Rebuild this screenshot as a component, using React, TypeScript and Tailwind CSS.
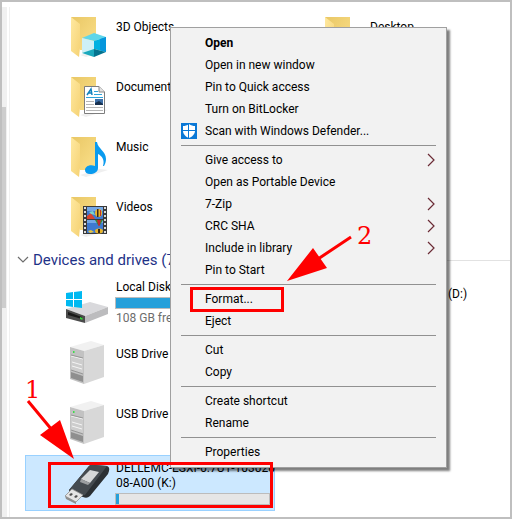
import { useId, type ReactNode } from "react";

function FolderBase({ id }: { id: string }) {
  return (
    <>
      <defs>
        <linearGradient id={`${id}b`} x1="0" y1="0" x2="1" y2="1">
          <stop offset="0" stopColor="#e9c765" />
          <stop offset="1" stopColor="#fbe08a" />
        </linearGradient>
        <linearGradient id={`${id}f`} x1="0" y1="0" x2="1" y2="1">
          <stop offset="0" stopColor="#ffe9a0" />
          <stop offset="1" stopColor="#f5d274" />
        </linearGradient>
      </defs>
      <path d="M16 43 L36 37 L44 38 L22 45Z" fill="#efefef" />
      <path d="M7 5 H32 V38 H16 Z" fill={`url(#${id}b)`} />
      <path d="M7 5 L16 12 V36 L15 45 L7 39Z" fill={`url(#${id}f)`} />
    </>
  );
}

function FolderIcon({ children }: { children?: ReactNode }) {
  const id = useId();
  return (
    <svg viewBox="0 0 48 48" className="h-12 w-12 shrink-0" aria-hidden="true">
      <FolderBase id={id} />
      {children}
    </svg>
  );
}

function CubeArt() {
  return (
    <>
      <path d="M18 26 L30 21 L42 25 L30 29Z" fill="#5fd6ea" />
      <path d="M18 26 L30 29 V38 L18 41Z" fill="#cdf0f6" />
      <path d="M30 29 L42 25 V40 L30 37Z" fill="#00b1e1" />
      <path d="M36 27 L42 25 V40 L36 38Z" fill="#0596dc" />
      <path d="M18 41 L30 37 V45Z" fill="#1ba9bd" />
      <path d="M30 37 L42 40 L30 45Z" fill="#04738f" />
    </>
  );
}

function DocumentArt() {
  return (
    <>
      <path d="M20.500 14.500 H35 L40.500 20 V41.500 H20.500Z" fill="#fff" stroke="#7d7d7d" />
      <path d="M35 14.500 V20 H40.500" fill="#e3e3e3" stroke="#8a8a8a" />
      <path d="M23 23 L27 17 L28 23 M24.500 21 H28" fill="none" stroke="#1583bd" strokeWidth="1.500" />
      <path d="M30 19.500 H34 M30 22.500 H38 M22 25.500 H39" stroke="#2fa3da" />
      <path d="M22 29.500 H30 M22 32.500 H30 M22 35.500 H39 M22 38.500 H39" stroke="#b5b5b5" />
      <path d="M31 27 H39 V33 H31Z" fill="#3d6fa8" />
      <path d="M31 31 L35 29 L39 32 V33 H31Z" fill="#17304f" />
    </>
  );
}

function MusicArt() {
  return (
    <path
      d="M31 10 H33 C34 17 42 19 42 27 C42 30 41 32 40 34 H39 C41 28 38 24 34 22 V36 C34 40 30 42 26 42 C23 42 21 40.500 21 38 C21 35 25 32 31 34Z"
      fill="#0a9bef"
    />
  );
}

function VideoArt() {
  const holes = [15, 19, 23, 27, 31, 35, 39];
  return (
    <>
      <path d="M19 14 H43 V42 H19Z" fill="#3a3a3a" />
      {holes.map((y) => (
        <path key={y} d={`M20 ${y} h2 v2 h-2z M40 ${y} h2 v2 h-2z`} fill="#dcdcdc" />
      ))}
      <path d="M23 15 H39 V27 H23Z M23 28 H39 V41 H23Z" fill="#3f79cf" />
      <path d="M23 15 H39 V19 H23Z M23 28 H39 V31 H23Z" fill="#74a8e6" />
      <path d="M23 24 L27 21 L31 27 H23Z" fill="#d8442f" />
      <path d="M25 20 L29 19 L31 23 L27 22Z" fill="#7fd4c8" />
      <ellipse cx="34.500" cy="21" rx="3.500" ry="4" fill="#e9b52c" />
      <path d="M33 17 h1.500 v8 h-1.500z" fill="#3a2a18" />
      <path d="M36 18 h1 v6 h-1z" fill="#c33428" />
      <path d="M31 28 H39 L36 33 H34Z" fill="#2f8a3c" />
      <path d="M33 28 H37 L35.500 34 H34.500Z" fill="#c92a2a" />
      <ellipse cx="35" cy="39" rx="4" ry="2.500" fill="#e9b52c" />
      <path d="M34 37 h2 v4 h-2z" fill="#3a2a18" />
      <path d="M24 39 L27 38 L30 40 L26 41Z" fill="#e8c640" />
    </>
  );
}

function SystemDriveIcon() {
  return (
    <svg viewBox="0 0 48 48" className="h-12 w-12 shrink-0" aria-hidden="true">
      <path d="M2 30 L26 23 L44 28 L21 37Z" fill="#d9d9dc" />
      <path d="M2 30 L21 37 V44 L2 39Z" fill="#4b4b4b" />
      <path d="M21 37 L44 28 V35 L21 44Z" fill="#bcbcbe" />
      <path d="M4 33 L18 38 V40 L4 36Z" fill="#191919" />
      <path d="M16 38 L18.500 39 V41 L16 40Z" fill="#34d639" />
      <path d="M2 14 L9 13 V20 H2Z M10 13 L18 12 V20 H10Z M2 21 H9 V28 L2 27Z M10 21 H18 V29 L10 28Z" fill="#00b9f1" />
    </svg>
  );
}

function TowerIcon() {
  return (
    <svg viewBox="0 0 48 48" className="h-12 w-12 shrink-0" aria-hidden="true">
      <path d="M6 8 L27 2 L40 6 L20 12Z" fill="#f1f1f1" />
      <path d="M6 8 L20 12 V45 L6 40Z" fill="#c2c2c2" />
      <path d="M20 12 L40 6 V38 L20 45Z" fill="#d8d8d8" />
      <path d="M7 17 L19 20 V34 L7 31Z" fill="#cdcdcd" />
      <path d="M7 17 L19 20 M8 23 L18 26 M8 27 L18 30" stroke="#f4f4f4" fill="none" />
      <path d="M7 16 L19 19 M7 31 L19 35" stroke="#979797" fill="none" />
      <path d="M7 33 L19 37 V43 L7 39Z" fill="#8f8f8f" />
      <path d="M9 12 h1.500 v2 h-1.500z" fill="#3fdc4c" />
    </svg>
  );
}

function UsbStickIcon() {
  return (
    <svg viewBox="0 0 48 48" className="h-12 w-12 shrink-0" aria-hidden="true">
      <path d="M5 31 L25 7 Q27 5 30 6 L43 7 Q46 8 45 12 L44 15 L26 37 Q23 40 19 38 L6 34Z" fill="#2b3034" />
      <path d="M5 31 L25 7 Q27 5 30 6 L43 7 L21 36 Q18 37 15 35Z" fill="#454b50" />
      <path d="M17 20 L26 11 L35 13 L26 24Z" fill="#d5d7d8" />
      <path d="M17 20 L26 24 L24 26 L16 23Z" fill="#9c9fa1" />
      <path d="M1 37 L8 30 L19 36 L12 43Z" fill="#e4e4e4" stroke="#929292" strokeWidth="0.800" />
      <path d="M1 37 L12 43 V45 L2 40Z" fill="#8d8d8d" />
      <path d="M5 36 L7 34 L9 35 L7 37Z M10 38 L12 36 L14 37 L12 39Z" fill="#4e4e4e" />
    </svg>
  );
}

function ShieldIcon() {
  return (
    <svg viewBox="0 0 16 16" className="h-4 w-4" aria-hidden="true">
      <path d="M0 0 H16 V16 H0Z" fill="#0a78d6" />
      <path d="M8 1 C6 2.500 4 3 2 3 V8 C2 11 5 14 8 15 C11 14 14 11 14 8 V3 C12 3 10 2.500 8 1Z" fill="#fff" />
      <path d="M7.500 1 V15 M2 7.500 H14" stroke="#0a78d6" />
    </svg>
  );
}

const folders = [
  { name: "3D Objects", art: <CubeArt /> },
  { name: "Documents", art: <DocumentArt /> },
  { name: "Music", art: <MusicArt /> },
  { name: "Videos", art: <VideoArt /> },
];

type Item = { label: string; bold?: boolean; sub?: boolean; shield?: boolean };

const groups: Item[][] = [
  [
    { label: "Open", bold: true },
    { label: "Open in new window" },
    { label: "Pin to Quick access" },
    { label: "Turn on BitLocker" },
    { label: "Scan with Windows Defender...", shield: true },
  ],
  [
    { label: "Give access to", sub: true },
    { label: "Open as Portable Device" },
    { label: "7-Zip", sub: true },
    { label: "CRC SHA", sub: true },
    { label: "Include in library", sub: true },
    { label: "Pin to Start" },
  ],
  [{ label: "Format..." }, { label: "Eject" }],
  [{ label: "Cut" }, { label: "Copy" }],
  [{ label: "Create shortcut" }, { label: "Rename" }],
  [{ label: "Properties" }],
];

function Tile({ name, children }: { name: string; children: ReactNode }) {
  return (
    <div className="flex h-[60px] items-start gap-1 pl-[39px]">
      {children}
      <span className="mt-2">{name}</span>
    </div>
  );
}

function Drive({ icon, selected, children }: { icon: ReactNode; selected?: boolean; children: ReactNode }) {
  return (
    <div
      className={
        selected
          ? "flex h-14 items-center gap-1 border border-[#99d1ff] bg-[#cce8ff] pl-[38px] pr-1"
          : "flex h-14 items-center gap-1 border border-transparent pl-[38px] pr-1"
      }
    >
      {icon}
      <div className="min-w-0 flex-1 whitespace-nowrap">{children}</div>
    </div>
  );
}

function CapacityBar({ used }: { used: number }) {
  return (
    <div className="-ml-px h-3 border border-[#bcbcbc] bg-[#e6e6e6]">
      <div className="h-full bg-[#26a0da]" style={{ width: `${used}%` }} />
    </div>
  );
}

function ContextMenu() {
  return (
    <div
      role="menu"
      className="absolute left-[168px] top-[25px] w-[277px] border border-[#a0a0a0] bg-[#f2f2f2] pb-1 pt-1 text-black shadow-[3px_3px_2px_rgba(0,0,0,0.500)]"
    >
      {groups.map((group, i) => (
        <div key={group[0].label}>
          {i > 0 && (
            <div className="flex h-[7px] items-center px-[10px]">
              <hr className="w-full border-[#919191]" />
            </div>
          )}
          {group.map((item) => (
            <button
              key={item.label}
              type="button"
              role="menuitem"
              className="flex h-[22px] w-full items-center pl-[10px] pr-[11px] text-left"
            >
              <span className="w-6 shrink-0">{item.shield && <ShieldIcon />}</span>
              <span className={item.bold ? "flex-1 font-bold" : "flex-1"}>{item.label}</span>
              {item.sub && (
                <svg viewBox="0 0 8 14" className="h-3.5 w-2" fill="none" aria-hidden="true">
                  <path d="M1 1 L7 7 L1 13" stroke="#6b2b35" strokeWidth="1.200" />
                </svg>
              )}
            </button>
          ))}
        </div>
      ))}
    </div>
  );
}

function Annotations() {
  return (
    <div className="pointer-events-none absolute inset-0 font-['DejaVu_Serif',serif] text-2xl leading-6 text-[#ff0000]">
      <div className="absolute left-[188px] top-[285px] h-[25px] w-[94px] border-3 border-[#ff0000]" />
      <div className="absolute left-[46px] top-[460px] h-[46px] w-[225px] border-3 border-[#ff0000]" />
      <svg className="absolute left-0 top-0 h-[480px] w-[400px]" viewBox="2 2 400 480" fill="#ff0000" aria-hidden="true">
        <path d="M28 401 L52 430 M351 237 L318 259" stroke="#ff0000" strokeWidth="3" />
        <path d="M74 459 L40 435 L60 420Z M287 281 L313 248 L327 268Z" />
      </svg>
      <span className="absolute left-[23px] top-[376px]">1</span>
      <span className="absolute left-[355px] top-[222px]">2</span>
    </div>
  );
}

export default function App() {
  return (
    <div className="relative flex min-h-screen overflow-hidden border-2 border-[#bfbfbf] bg-white font-[Roboto,'Open_Sans',sans-serif] text-xs leading-[15px] text-black">
      <div className="mt-[5px] flex w-[5px] shrink-0 flex-col bg-[#f0f0f0] pt-[100px]">
        <div className="h-[201px] w-1 bg-[#cdcdcd]" />
      </div>
      <div className="ml-0.5 mt-[5px] w-px shrink-0 bg-[#f0f0f0]" />
      <main className="min-w-0 flex-1 overflow-hidden pl-[15px]">
        <section className="grid grid-cols-[250px_250px] gap-x-1 pt-[10px]">
          <div>
            {folders.map((f) => (
              <Tile key={f.name} name={f.name}>
                <FolderIcon>{f.art}</FolderIcon>
              </Tile>
            ))}
          </div>
          <Tile name="Desktop">
            <FolderIcon />
          </Tile>
        </section>
        <h2 className="-ml-2 flex h-4 items-center text-[15px] leading-4 text-[#1e3287]">
          <svg viewBox="0 0 12 8" className="mr-1 h-2 w-3" fill="none" aria-hidden="true">
            <path d="M1 1 L6 6 L11 1" stroke="#6d6d6d" strokeWidth="1.200" />
          </svg>
          <span>Devices and drives (7)</span>
          <span className="ml-2 h-px flex-1 bg-[#e2e2e2]" />
        </h2>
        <section className="grid grid-cols-[250px_250px] gap-x-1 pt-[7px]">
          <div className="flex flex-col gap-1">
            <Drive icon={<SystemDriveIcon />}>
              <p>Local Disk (C:)</p>
              <div className="my-0.5">
                <CapacityBar used={60} />
              </div>
              <p className="text-[#6d6d6d]">108 GB free</p>
            </Drive>
            <Drive icon={<TowerIcon />}>
              <p className="h-8">USB Drive</p>
            </Drive>
            <Drive icon={<TowerIcon />}>
              <p className="h-8">USB Drive</p>
            </Drive>
            <Drive icon={<UsbStickIcon />} selected>
              <p>DELLEMC-ESXI-6.7U1-103020</p>
              <p>08-A00 (K:)</p>
              <div className="mt-0.5">
                <CapacityBar used={2} />
              </div>
            </Drive>
          </div>
          <p className="pl-[169px] pt-3">(D:)</p>
        </section>
      </main>
      <ContextMenu />
      <Annotations />
    </div>
  );
}
